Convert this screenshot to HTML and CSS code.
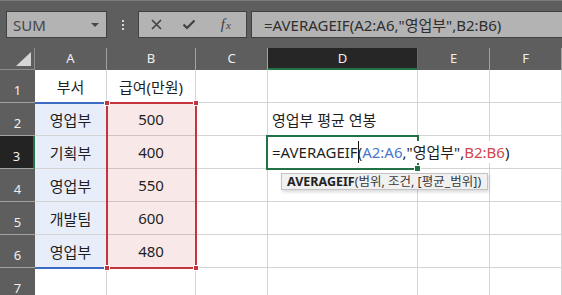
FILE: index.html
```html
<!DOCTYPE html>
<html lang="ko">
<head>
    <meta charset="UTF-8">
    <title>AVERAGEIF</title>
    <link rel="stylesheet" href="styles.css">
</head>
<body>
    <div class="toolbar">
        <div class="namebox">
            <span>SUM</span>
            <span class="caret"></span>
        </div>
        <div class="grip"><i></i><i></i><i></i></div>
        <div class="fx-buttons">
            <span class="btn">
                <svg width="11" height="11" viewBox="0 0 11 11"><path d="M1 1L10 10M10 1L1 10" stroke="#404040" stroke-width="1.6" fill="none"/></svg>
            </span>
            <span class="btn">
                <svg width="14" height="11" viewBox="0 0 14 11"><path d="M1.5 5.5L5 9L12.5 1.5" stroke="#404040" stroke-width="2.2" fill="none"/></svg>
            </span>
            <span class="btn fx">f<small>x</small></span>
        </div>
        <div class="formula">=AVERAGEIF(A2:A6,"영업부",B2:B6)</div>
    </div>

    <div class="sheet">
        <div class="grid">
            <div class="corner"><span class="tri"></span></div>
            <div class="col-head">A</div>
            <div class="col-head">B</div>
            <div class="col-head">C</div>
            <div class="col-head active">D</div>
            <div class="col-head">E</div>
            <div class="col-head">F</div>

            <div class="row-head">1</div>
            <div class="cell">부서</div>
            <div class="cell">급여(만원)</div>
            <div class="cell"></div>
            <div class="cell"></div>
            <div class="cell"></div>
            <div class="cell"></div>

            <div class="row-head">2</div>
            <div class="cell blue">영업부</div>
            <div class="cell red">500</div>
            <div class="cell"></div>
            <div class="cell left">영업부 평균 연봉</div>
            <div class="cell"></div>
            <div class="cell"></div>

            <div class="row-head active">3</div>
            <div class="cell blue">기획부</div>
            <div class="cell red">400</div>
            <div class="cell"></div>
            <div class="cell left"><span class="editor">=AVERAGEIF<span class="cursor"></span>(<span class="ref-a">A2:A6</span>,"영업부",<span class="ref-b">B2:B6</span>)</span></div>
            <div class="cell"></div>
            <div class="cell"></div>

            <div class="row-head">4</div>
            <div class="cell blue">영업부</div>
            <div class="cell red">550</div>
            <div class="cell"></div>
            <div class="cell"></div>
            <div class="cell"></div>
            <div class="cell"></div>

            <div class="row-head">5</div>
            <div class="cell blue">개발팀</div>
            <div class="cell red">600</div>
            <div class="cell"></div>
            <div class="cell"></div>
            <div class="cell"></div>
            <div class="cell"></div>

            <div class="row-head">6</div>
            <div class="cell blue">영업부</div>
            <div class="cell red">480</div>
            <div class="cell"></div>
            <div class="cell"></div>
            <div class="cell"></div>
            <div class="cell"></div>

            <div class="row-head">7</div>
            <div class="cell"></div>
            <div class="cell"></div>
            <div class="cell"></div>
            <div class="cell"></div>
            <div class="cell"></div>
            <div class="cell"></div>
        </div>

        <!-- range outlines drawn over the grid -->
        <div class="range-a"></div>
        <div class="range-b">
            <i class="h tl"></i><i class="h tr"></i><i class="h bl"></i><i class="h br"></i>
        </div>
        <div class="active-cell"><i class="fill"></i></div>
        <div class="tip"><b>AVERAGEIF</b>(범위, 조건, [평균_범위])</div>
    </div>
</body>
</html>
```

FILE: styles.css
```css
* {
    margin: 0;
    padding: 0;
    box-sizing: border-box;
}

body {
    width: 562px;
    height: 295px;
    overflow: hidden;
    background-color: #fff;
    font-family: "Noto Sans", "Noto Sans CJK KR", sans-serif;
}

/* 상단 수식 입력줄 */
.toolbar {
    height: 48px;
    display: flex;
    align-items: flex-start;
    padding: 10px 0 0 6px;
    background-color: #5e5e5e;
    border-top: 1px solid #7c7c7c;
}

.namebox,
.fx-buttons,
.formula {
    height: 27px;
    background-color: #b3b3b3;
    border: 1px solid #414141;
}

.namebox {
    width: 101px;
    display: flex;
    align-items: center;
    justify-content: space-between;
    padding: 0 7px 0 6px;
    font-size: 15px;
    color: #474747;
}

.namebox .caret {
    width: 0;
    height: 0;
    border-left: 4px solid transparent;
    border-right: 4px solid transparent;
    border-top: 4px solid #474747;
}

.grip {
    width: 31px;
    height: 27px;
    display: flex;
    flex-direction: column;
    align-items: center;
    justify-content: center;
    gap: 2px;
}

.grip i {
    width: 2px;
    height: 2px;
    background-color: #d6d6d6;
}

.fx-buttons {
    width: 109px;
    display: flex;
    align-items: center;
    padding-left: 1px;
}

.fx-buttons .btn {
    width: 36px;
    display: flex;
    justify-content: center;
}

.fx-buttons .fx {
    width: 44px;
    font-family: "Liberation Serif", serif;
    font-style: italic;
    font-size: 15px;
    color: #404040;
}

.fx-buttons .fx small {
    font-size: 11px;
    margin-left: 1px;
    padding-top: 3px;
}

.formula {
    flex: 1;
    margin-left: 4px;
    border-right: none;
    padding: 1px 0 0 12px;
    font-size: 15px;
    line-height: 24px;
    color: #2e2e2e;
    white-space: nowrap;
}

/* 시트 */
.sheet {
    position: relative;
}

.grid {
    display: grid;
    grid-template-columns: 35px 72px 89px 72px 150px 72px 72px;
    grid-template-rows: 22px repeat(7, 33px);
    font-size: 15px;
    color: #1f1f1f;
}

.corner {
    position: relative;
    background-color: #5e5e5e;
    border-right: 1px solid #8d8d8d;
    border-bottom: 1px solid #8d8d8d;
}

.corner .tri {
    position: absolute;
    right: 3px;
    bottom: 3px;
    width: 0;
    height: 0;
    border-left: 15px solid transparent;
    border-bottom: 14px solid #d6d6d6;
}

.col-head {
    display: flex;
    align-items: center;
    justify-content: center;
    padding-bottom: 3px;
    background-color: #5e5e5e;
    border-right: 1px solid #a2a2a2;
    font-size: 13px;
    color: #f0f0f0;
}

.col-head.active {
    padding-bottom: 1px;
    background-color: #262626;
    border-bottom: 2px solid #217346;
    border-right-color: #6a6a6a;
}

.row-head {
    display: flex;
    align-items: flex-end;
    justify-content: center;
    padding-bottom: 4px;
    background-color: #5e5e5e;
    border-bottom: 1px solid #a2a2a2;
    font-size: 13px;
    line-height: 16px;
    color: #f0f0f0;
}

.row-head.active {
    background-color: #232323;
    border-right: 2px solid #217346;
}

.cell {
    display: flex;
    align-items: center;
    justify-content: center;
    border-right: 1px solid #d4d4d4;
    border-bottom: 1px solid #d4d4d4;
    white-space: nowrap;
}

.cell.left {
    justify-content: flex-start;
    padding-left: 4px;
    overflow: visible;
}

.cell.blue {
    background-color: #e7eef9;
}

.cell.red {
    background-color: #f9e8e8;
    border-bottom-color: #cfc3c3;
}

/* 편집 중인 셀: 흰 바탕이 오른쪽 테두리를 덮음 */
.editor {
    position: relative;
    z-index: 2;
    padding-right: 3px;
    background-color: #fff;
    font-size: 15px;
    line-height: 22px;
    color: #1f1f1f;
}

.ref-a {
    color: #4a76cf;
}

.ref-b {
    color: #d2454d;
}

.cursor {
    display: inline-block;
    width: 1px;
    height: 22px;
    margin-right: -1px;
    vertical-align: top;
    background-color: #111;
}

/* 참조 범위 테두리 */
.range-a {
    position: absolute;
    left: 35px;
    top: 54px;
    width: 72px;
    height: 167px;
    border-top: 2px solid #3b6cc4;
    border-bottom: 2px solid #3b6cc4;
}

.range-b {
    position: absolute;
    left: 106px;
    top: 54px;
    width: 91px;
    height: 167px;
    border: 2px solid #c2343e;
}

.range-b .h {
    position: absolute;
    width: 6px;
    height: 6px;
    background-color: #c2343e;
    border: 1px solid #fff;
}

.range-b .tl { left: -4px; top: -4px; }
.range-b .tr { right: -4px; top: -4px; }
.range-b .bl { left: -4px; bottom: -4px; }
.range-b .br { right: -4px; bottom: -4px; }

.active-cell {
    position: absolute;
    z-index: 1;
    left: 266px;
    top: 87px;
    width: 153px;
    height: 35px;
    border: 2px solid #217346;
}

.active-cell .fill {
    position: absolute;
    right: -4px;
    bottom: -4px;
    width: 7px;
    height: 7px;
    background-color: #217346;
    border: 1px solid #fff;
}

.tip {
    position: absolute;
    z-index: 3;
    left: 281px;
    top: 125px;
    width: 207px;
    height: 17px;
    padding-left: 5px;
    background-color: #f1f1f1;
    border: 1px solid #c4c4c4;
    box-shadow: 1px 2px 3px rgba(0, 0, 0, 0.15);
    font-size: 12.5px;
    line-height: 15px;
    color: #3a3a3a;
    white-space: nowrap;
}

.tip b {
    color: #222;
}
```
